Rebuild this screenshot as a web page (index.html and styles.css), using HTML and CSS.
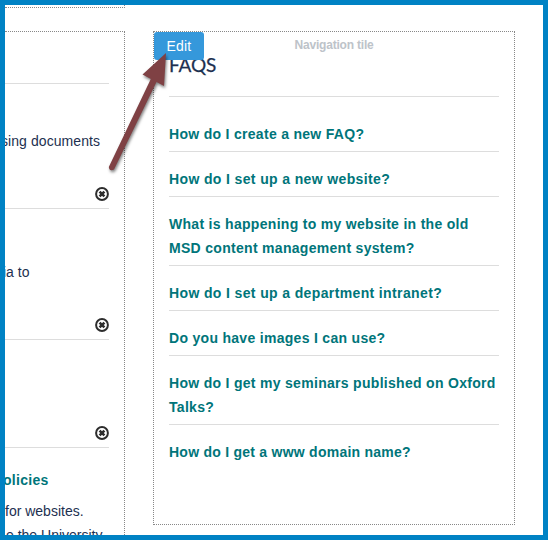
FILE: index.html
```html
<!DOCTYPE html>
<html lang="en">
<head>
<meta charset="utf-8">
<title>FAQs</title>
<link rel="stylesheet" href="styles.css">
</head>
<body>
<svg class="defs" width="0" height="0" aria-hidden="true">
  <symbol id="remove" viewBox="0 0 14 14">
    <circle cx="7" cy="7" r="5.900" fill="none" stroke="#2d2d2d" stroke-width="2"/>
    <path d="M4.600 4.600L9.400 9.400M9.400 4.600L4.600 9.400" stroke="#2d2d2d" stroke-width="2.600"/>
  </symbol>
</svg>
<div class="frame">
  <div class="side">
    <div class="tile previous"></div>
    <div class="tile listing">
      <div class="row title-row"></div>
      <div class="row first"><p class="text documents">sing documents</p><svg class="remove"><use href="#remove"/></svg></div>
      <div class="row second"><p class="text">ia to</p><svg class="remove"><use href="#remove"/></svg></div>
      <div class="row third"><svg class="remove"><use href="#remove"/></svg></div>
      <div class="policies">
        <a class="link policy-link">olicies</a>
        <p class="text websites">for websites.</p>
        <p class="text university">e the University</p>
      </div>
    </div>
  </div>
  <div class="tile nav-tile">
    <button class="edit">Edit</button>
    <div class="tile-label">Navigation tile</div>
    <h2>FAQS</h2>
    <ul>
      <li><a class="link">How do I create a new FAQ?</a></li>
      <li><a class="link wide">How do I set up a new website?</a></li>
      <li><a class="link">What is happening to my website in the old<br>MSD content management system?</a></li>
      <li><a class="link wide">How do I set up a department intranet?</a></li>
      <li><a class="link">Do you have images I can use?</a></li>
      <li><a class="link">How do I get my seminars published on Oxford<br>Talks?</a></li>
      <li><a class="link narrow">How do I get a www domain name?</a></li>
    </ul>
  </div>
</div>
<svg class="arrow" width="80" height="130" viewBox="100 50 80 130">
  <path d="M166 53L164 86L156.500 82L114 169.500Q109.500 172 108.800 167L150.800 79L142.500 74.500Z" fill="#7f4144"/>
</svg>
</body>
</html>
```
FILE: styles.css
```css
* { box-sizing: border-box; }
body { margin: 0; font: 14px/24px "Liberation Sans", Arial, sans-serif; color: #1d3050; }
p, ul, h2 { margin: 0; padding: 0; }
.defs { position: absolute; }
.frame {
  width: 548px; height: 540px; border: 5px solid #0082c4; background: #fff;
  overflow: hidden; display: flex; gap: 28px; align-items: flex-start;
}
.tile { border: 1px dotted #888; }
.side { flex: 0 0 120px; }
.previous { height: 3px; border-width: 0 1px 1px 0; margin-bottom: 23px; }
.listing { height: 530px; border-left: 0; padding-right: 15px; }
.row { border-bottom: 1px solid #ddd; display: flex; flex-direction: column; justify-content: flex-end; }
.title-row { height: 52px; }
.first { height: 125px; }
.second { height: 131px; }
.third { height: 108px; }
.remove { width: 14px; height: 14px; align-self: flex-end; margin-bottom: 7px; }
.row .text { margin-bottom: 34px; white-space: nowrap; }
.first .text { margin: 0 0 34px -4px; letter-spacing: .07px; }
.second .text { margin: 0 0 34px -2px; }
.policies { padding-top: 20px; white-space: nowrap; }
.link { color: #00757a; font-weight: bold; letter-spacing: .3px; }
.link.wide { letter-spacing: .37px; }
.link.narrow { letter-spacing: .25px; }
.policy-link { display: block; margin-left: -2px; }
.websites { margin-top: 7px; }
.university { margin-left: 1px; }
.nav-tile { position: relative; width: 362px; height: 494px; margin-top: 26px; padding: 4px 15px 0; }
.edit {
  position: absolute; left: 0; top: 0; width: 50px; height: 28px; padding: 0;
  border: 0; border-radius: 3px; background: #3598db; color: #fff;
  font: 14px/28px "Liberation Sans", Arial, sans-serif; letter-spacing: .2px;
}
.tile-label { height: 18px; line-height: 18px; font-size: 12px; font-weight: bold; color: #bdc3c9; text-align: center; letter-spacing: -.2px; }
h2 { height: 44px; border-bottom: 1px solid #ddd; margin-top: -1px; margin-bottom: 11px; font: 19px/23px Lato, sans-serif; color: #1d3050; letter-spacing: -.1px; -webkit-text-stroke: .25px #1d3050; }
ul { list-style: none; }
li { padding: 15px 0 5px; border-bottom: 1px solid #ddd; white-space: nowrap; margin: 0; }
li:first-child { margin-top: -1px; }
li:last-child { border: 0; }
.arrow { position: absolute; left: 100px; top: 50px; filter: drop-shadow(1px 2px 1.500px rgba(0,0,0,.5)); }
```
